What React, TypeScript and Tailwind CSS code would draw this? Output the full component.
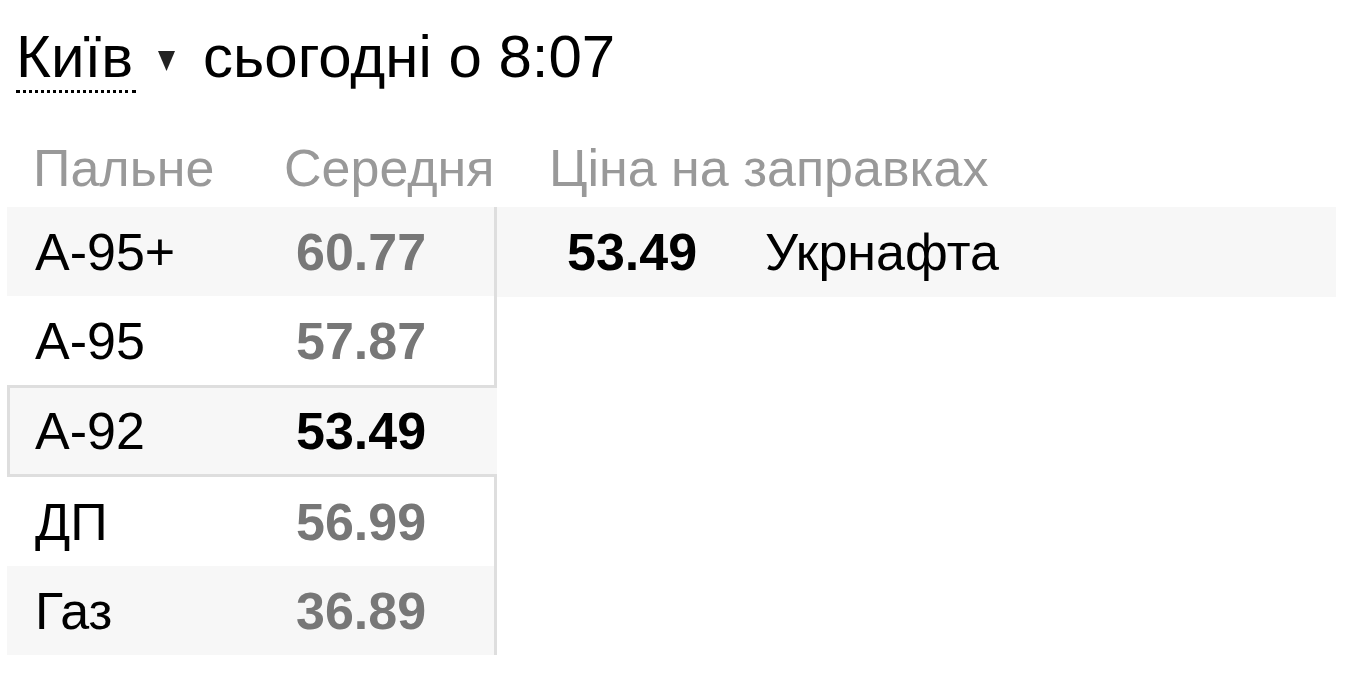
import React from 'react';

type FuelRow = {
  name: string;
  avg: string;
};

const fuels: FuelRow[] = [
  { name: 'А-95+', avg: '60.77' },
  { name: 'А-95', avg: '57.87' },
  { name: 'А-92', avg: '53.49' },
  { name: 'ДП', avg: '56.99' },
  { name: 'Газ', avg: '36.89' },
];

const selected = 2;

const stations = [{ price: '53.49', brand: 'Укрнафта' }];

export default function App() {
  return (
    <div className="min-h-screen bg-white pl-[7px] pr-[20px] font-['Liberation_Sans',Arial,sans-serif] text-black">
      {/* city + update time */}
      <div className="mt-[27px] flex items-start pl-[9px] text-[60px] leading-none">
        <span className="border-b-[3px] border-dotted border-black pb-[3px] pr-[3px]">Київ</span>
        <svg width="17" height="20" viewBox="0 0 17 20" className="ml-[22px] mt-[24px]">
          <polygon points="0,0 17,0 8.5,20" fill="#222" />
        </svg>
        <span className="ml-[28px]">сьогодні о 8:07</span>
      </div>

      {/* column titles */}
      <div className="mt-[49px] flex text-[52px] leading-none text-[#999]">
        <div className="w-[277px] pl-[26px]">Пальне</div>
        <div className="w-[265px]">Середня</div>
        <div>Ціна на заправках</div>
      </div>

      <div className="mt-[13px] flex items-start text-[52px] leading-none">
        <div className="w-[490px] shrink-0">
          {fuels.map((f, idx) => {
            const isSel = idx === selected;
            const bg = idx % 2 === 0 ? 'bg-[#f7f7f7]' : 'bg-white';
            return (
              <div
                key={f.name}
                className={
                  isSel
                    ? 'flex h-[92px] items-center border-y-[3px] border-l-[3px] border-[#dedede] bg-[#f7f7f7] pl-[25px]'
                    : `flex h-[89px] items-center border-r-[3px] border-[#dedede] pl-[28px] ${bg}`
                }
              >
                <div className="w-[261px]">{f.name}</div>
                <div className={isSel ? 'font-bold text-black' : 'font-bold text-[#777]'}>{f.avg}</div>
              </div>
            );
          })}
        </div>

        <div className="flex-1">
          {stations.map((s) => (
            <div key={s.brand} className="flex h-[90px] items-center bg-[#f7f7f7] pl-[70px]">
              <div className="w-[198px] font-bold">{s.price}</div>
              <div>{s.brand}</div>
            </div>
          ))}
        </div>
      </div>
    </div>
  );
}
